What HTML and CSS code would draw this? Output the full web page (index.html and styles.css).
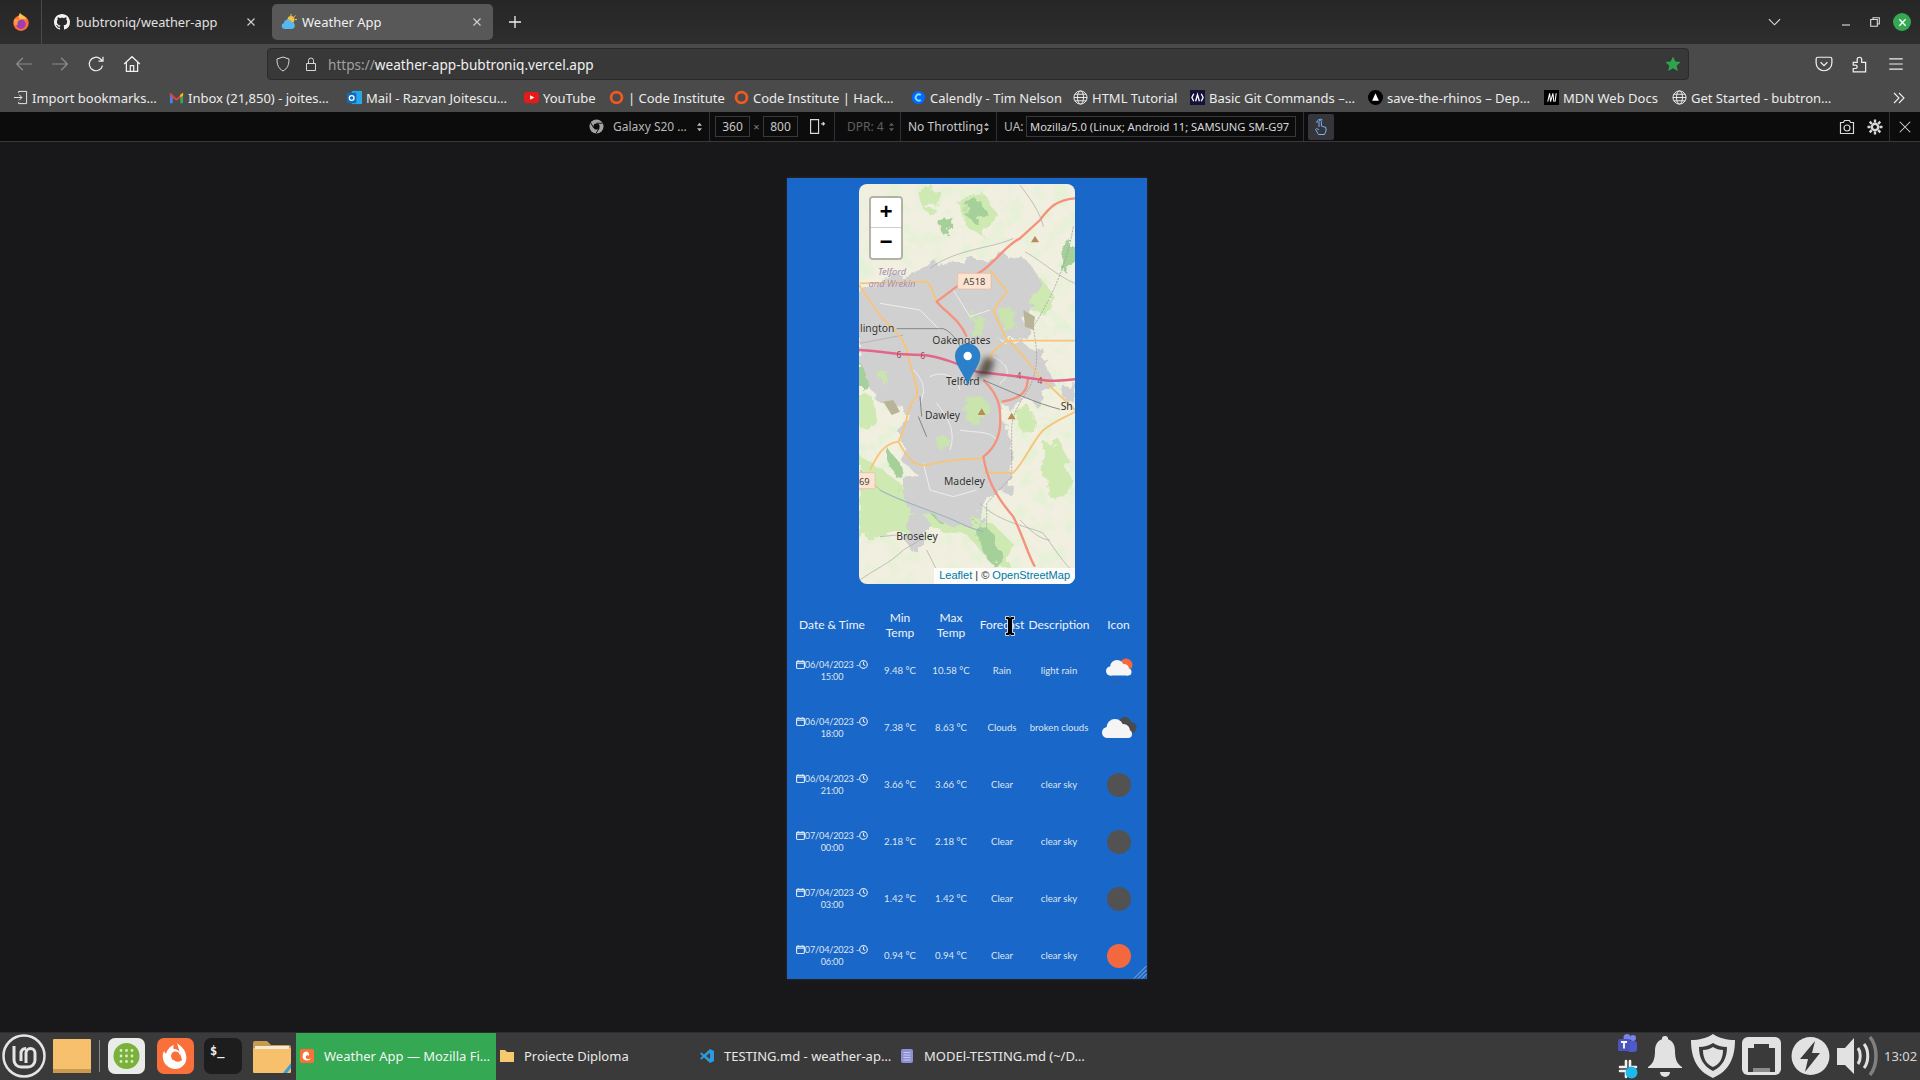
FILE: index.html
```html
<!DOCTYPE html>
<html lang="en">
  <head>
    <meta charset="UTF-8" />
    <meta name="viewport" content="width=device-width, initial-scale=1.0" />
    <title>Weather App</title>
    <link rel="stylesheet" href="styles.css">
  </head>

  <body>
    <svg class="sprites" width="0" height="0">
      <symbol id="calendar" viewBox="0 0 16 16">
        <path d="M1.5 5.5h13M4 .5v3M12 .5v3" stroke="currentColor" stroke-width="2" fill="none" />
        <rect x="1" y="2.5" width="14" height="12.5" rx="1.5" stroke="currentColor" stroke-width="2" fill="none" />
      </symbol>
      <symbol id="clock" viewBox="0 0 16 16">
        <circle cx="8" cy="8" r="6.8" stroke="currentColor" stroke-width="2" fill="none" />
        <path d="M8 3.5V8l3 2" stroke="currentColor" stroke-width="2" fill="none" />
      </symbol>
      <symbol id="globe" viewBox="0 0 16 16">
        <g stroke="currentColor" stroke-width="1" fill="none">
          <circle cx="8" cy="8" r="7" />
          <ellipse cx="8" cy="8" rx="3.2" ry="7" />
          <path d="M1 8h14M2 4.5h12M2 11.5h12" />
        </g>
      </symbol>
      <symbol id="updown" viewBox="0 0 8 12">
        <path d="M4 1l3 3.5H1zM4 11L1 7.5h6z" fill="currentColor" />
      </symbol>
    </svg>

    <header class="tabbar">
      <div class="tab-fox">
        <svg width="18" height="20" viewBox="0 0 16 18">
          <circle cx="8" cy="10" r="7" fill="#ff6a3d" />
          <circle cx="8" cy="11" r="4.2" fill="#9a3fb5" />
          <path d="M7 1c2 2 5 3 6 6-2-1-4-1-6 0-2-1.500-1-4 0-6z" fill="#ffc14d" />
          <path d="M1.5 7c2-1.500 4-1 5 .5-1.500 1-2 2.500-1.500 4L2 12z" fill="#ff9a3c" />
        </svg>
      </div>
      <div class="tab tab-repo">
        <svg class="tab-icon" viewBox="0 0 16 16"><path fill="#f2f2f2" d="M8 0C3.58 0 0 3.58 0 8c0 3.54 2.29 6.53 5.47 7.59.4.07.55-.17.55-.38 0-.19-.01-.82-.01-1.49-2.01.37-2.53-.49-2.69-.94-.09-.23-.48-.94-.82-1.13-.28-.15-.68-.52-.01-.53.63-.01 1.08.58 1.23.82.72 1.21 1.87.87 2.33.66.07-.52.28-.87.51-1.07-1.78-.2-3.64-.89-3.64-3.95 0-.87.31-1.59.82-2.15-.08-.2-.36-1.02.08-2.12 0 0 .67-.21 2.2.82.64-.18 1.32-.27 2-.27.68 0 1.36.09 2 .27 1.53-1.04 2.2-.82 2.2-.82.44 1.1.16 1.92.08 2.12.51.56.82 1.27.82 2.15 0 3.07-1.87 3.75-3.65 3.95.29.25.54.73.54 1.48 0 1.07-.01 1.93-.01 2.2 0 .21.15.46.55.38A8.013 8.013 0 0016 8c0-4.42-3.58-8-8-8z" /></svg>
        <span class="tab-title">bubtroniq/weather-app</span>
        <svg class="tab-close" viewBox="0 0 10 10"><path d="M1.5 1.5l7 7M8.5 1.5l-7 7" /></svg>
      </div>
      <div class="tab tab-active">
        <svg class="tab-icon" viewBox="0 0 16 16">
          <circle cx="10" cy="5.5" r="3.5" fill="#f5c242" />
          <path d="M10 0v2M14.5 1.5l-1.4 1.4M16 5.5h-2" stroke="#f5c242" stroke-width="1" />
          <path d="M3.5 15a3 3 0 0 1-.6-5.9 4 4 0 0 1 7.7-1.200 3.6 3.6 0 0 1 .4 7.100z" fill="#58b7ee" />
        </svg>
        <span class="tab-title">Weather App</span>
        <svg class="tab-close" viewBox="0 0 10 10"><path d="M1.5 1.5l7 7M8.5 1.5l-7 7" /></svg>
      </div>
      <svg class="tab-new" viewBox="0 0 12 12"><path d="M6 0v12M0 6h12" /></svg>
      <svg class="tab-list" viewBox="0 0 14 8"><path d="M1 1l6 6 6-6" /></svg>
      <div class="window-buttons">
        <svg class="win-min" viewBox="0 0 10 10"><path d="M1 8h8" /></svg>
        <svg class="win-max" viewBox="0 0 10 10"><path d="M3 2.5V.7h6.300V7H7.500M.7 2.500H7.300V9.300H.7z" /></svg>
        <div class="win-close">
          <svg viewBox="0 0 10 10"><path d="M1.5 1.5l7 7M8.5 1.5l-7 7" /></svg>
        </div>
      </div>
    </header>

    <nav class="navbar">
      <svg class="nav-btn nav-off" viewBox="0 0 16 16"><path d="M15 8H1.5M7 2.5L1.5 8 7 13.5" /></svg>
      <svg class="nav-btn nav-off" viewBox="0 0 16 16"><path d="M1 8h13.5M9 2.5L14.5 8 9 13.5" /></svg>
      <svg class="nav-btn" viewBox="0 0 16 16"><path d="M13.8 9.5A6 6 0 1 1 12 3.5L14 5.5M14.2 1.5v4h-4" /></svg>
      <svg class="nav-btn" viewBox="0 0 16 16"><path d="M1 8l7-6.500L15 8M3 6.500v8h10v-8M6.500 14.500v-5h3v5" /></svg>
      <div class="urlbar">
        <svg class="url-icon" viewBox="0 0 16 16"><path d="M8 1l6 2c0 6-1.500 9.500-6 12C3.500 12.500 2 9 2 3z" /></svg>
        <svg class="url-icon" viewBox="0 0 16 16"><path d="M3.5 7.5h9v7h-9zM5.500 7.500V4.500a2.500 2.500 0 0 1 5 0v3" /></svg>
        <span class="url-text"><span class="url-scheme">https://</span>weather-app-bubtroniq.vercel.app</span>
        <svg class="url-star" viewBox="0 0 16 16"><path d="M8 .5l2.300 5 5.300.6-3.900 3.600 1.100 5.300L8 12.300 3.200 15l1.100-5.300L.4 6.100l5.300-.6z" /></svg>
      </div>
      <div class="nav-right">
        <svg class="nav-btn" viewBox="0 0 16 16"><path d="M2.5 2h11A1.500 1.500 0 0 1 15 3.500V7a7 7 0 0 1-14 0V3.500A1.500 1.500 0 0 1 2.500 2zM5 6.500l3 3 3-3" /></svg>
        <svg class="nav-btn" viewBox="0 0 16 16"><path d="M2 6.500h3.500V4a2 2 0 0 1 4 0v2.500H13v8.500H2v-3h2a1.500 1.500 0 0 0 0-3H2z" /></svg>
        <svg class="nav-btn" viewBox="0 0 16 16"><path d="M2 3.500h12M2 8h12M2 12.500h12" /></svg>
      </div>
    </nav>

    <div class="bookmarks">
      <div class="bookmark">
        <svg class="bm-icon bm-line" viewBox="0 0 16 16"><path d="M6 3V1.500h8.500v13H6V13M1 8h8.500M6.500 5l3 3-3 3" /></svg>
        <span>Import bookmarks…</span>
      </div>
      <div class="bookmark">
        <svg class="bm-icon" viewBox="0 0 16 16"><path d="M1 14V3l3 2v9z" fill="#4285f4" /><path d="M15 14V3l-3 2v9z" fill="#34a853" /><path d="M1 3l7 6 7-6v3L8 11.500 1 6z" fill="#ea4335" /><path d="M12 5l3-2v3l-3 2z" fill="#fbbc04" /></svg>
        <span>Inbox (21,850) - joites…</span>
      </div>
      <div class="bookmark">
        <svg class="bm-icon" viewBox="0 0 16 16"><rect x="5" y="1" width="11" height="14" fill="#28a8ea" /><rect x="0" y="3" width="10" height="11" rx="1" fill="#0f6cbd" /><circle cx="5" cy="8.5" r="2.5" fill="none" stroke="#fff" stroke-width="1.4" /></svg>
        <span>Mail - Razvan Joitescu…</span>
      </div>
      <div class="bookmark">
        <svg class="bm-icon" viewBox="0 0 16 16"><rect y="2" width="16" height="12" rx="3" fill="#e61a1a" /><path d="M6.5 5.5v5L11 8z" fill="#fff" /></svg>
        <span>YouTube</span>
      </div>
      <div class="bookmark">
        <svg class="bm-icon" viewBox="0 0 16 16"><circle cx="8" cy="8" r="5.8" fill="none" stroke="#f0591f" stroke-width="3" /></svg>
        <span>| Code Institute</span>
      </div>
      <div class="bookmark">
        <svg class="bm-icon" viewBox="0 0 16 16"><circle cx="8" cy="8" r="5.8" fill="none" stroke="#f0591f" stroke-width="3" /></svg>
        <span>Code Institute | Hack…</span>
      </div>
      <div class="bookmark">
        <svg class="bm-icon" viewBox="0 0 16 16"><circle cx="8" cy="8" r="7" fill="#0069ff" /><path d="M10.5 5.5a3.3 3.3 0 1 0 0 5" fill="none" stroke="#7ee0ff" stroke-width="2" /></svg>
        <span>Calendly - Tim Nelson</span>
      </div>
      <div class="bookmark">
        <svg class="bm-icon bm-globe"><use href="#globe" /></svg>
        <span>HTML Tutorial</span>
      </div>
      <div class="bookmark">
        <svg class="bm-icon" viewBox="0 0 16 16"><rect width="16" height="16" fill="#14123a" /><path d="M4 4L2 8l2 4M12 4l2 4-2 4M6 12l2-7 2 7" fill="none" stroke="#fff" stroke-width="1.4" /></svg>
        <span>Basic Git Commands –…</span>
      </div>
      <div class="bookmark">
        <svg class="bm-icon" viewBox="0 0 16 16"><circle cx="8" cy="8" r="8" fill="#000" /><path d="M8 3.5l3.6 8H4.4z" fill="#fff" /></svg>
        <span>save-the-rhinos – Dep…</span>
      </div>
      <div class="bookmark">
        <svg class="bm-icon" viewBox="0 0 16 16"><rect width="16" height="16" fill="#000" /><path d="M4 12.5l2-9 1 9 2.500-9 1 9M13 3.500l-1.200 9" fill="none" stroke="#fff" stroke-width="1.1" /></svg>
        <span>MDN Web Docs</span>
      </div>
      <div class="bookmark">
        <svg class="bm-icon bm-globe"><use href="#globe" /></svg>
        <span>Get Started - bubtron…</span>
      </div>
      <svg class="bm-more" viewBox="0 0 12 12"><path d="M1 1l5 5-5 5M6 1l5 5-5 5" /></svg>
    </div>

    <div class="rdm">
      <svg class="rdm-chrome" viewBox="0 0 16 16"><circle cx="8" cy="8" r="7.5" fill="#a3a3a3" /><circle cx="8" cy="8" r="3.3" fill="#0c0c0d" /><path d="M8 4.500h6.500M5 9.500L1.800 4M10.800 9.800L7.500 15.300" stroke="#0c0c0d" stroke-width="1" /></svg>
      <span class="rdm-device">Galaxy S20 …</span>
      <svg class="rdm-arrows"><use href="#updown" /></svg>
      <i class="rdm-sep rdm-sep-a"></i>
      <span class="rdm-input">360</span>
      <span class="rdm-times">×</span>
      <span class="rdm-input">800</span>
      <svg class="rdm-rotate" viewBox="0 0 16 16"><path d="M1.5 1.5h7.500v13H1.500zM11.500 5.500h2.500M13 4l1.500 1.500L13 7" /></svg>
      <i class="rdm-sep rdm-sep-b"></i>
      <span class="rdm-dpr">DPR: 4</span>
      <svg class="rdm-arrows rdm-dim"><use href="#updown" /></svg>
      <i class="rdm-sep rdm-sep-c"></i>
      <span class="rdm-throttle">No Throttling</span>
      <svg class="rdm-arrows rdm-near"><use href="#updown" /></svg>
      <i class="rdm-sep rdm-sep-c"></i>
      <span class="rdm-ua-label">UA:</span>
      <span class="rdm-ua">Mozilla/5.0 (Linux; Android 11; SAMSUNG SM-G97</span>
      <i class="rdm-sep rdm-sep-d"></i>
      <span class="rdm-touch">
        <svg viewBox="0 0 16 16"><path d="M6 8V2.500a1.200 1.200 0 0 1 2.400 0V7l4.600 1.500V12l-1.500 3.500h-6L2.500 10.500 3.500 9.500 6 11" /><path d="M3.800 4A3.500 3.500 0 0 1 9.500 1" /></svg>
      </span>
      <div class="rdm-right">
        <svg class="rdm-tool" viewBox="0 0 16 16"><path d="M1.5 3.500h3l1-2h5l1 2h3v11h-13z" /><circle cx="8" cy="9" r="3" /></svg>
        <svg class="rdm-tool" viewBox="0 0 16 16"><circle cx="8" cy="8" r="3.2" stroke-width="2.4" /><path d="M8 .5v3M8 12.500v3M.5 8h3M12.500 8h3M2.700 2.700l2.100 2.100M11.200 11.200l2.100 2.100M2.700 13.300l2.100-2.100M11.200 4.800l2.100-2.100" stroke-width="2.4" /></svg>
        <i class="rdm-sep rdm-sep-e"></i>
        <svg class="rdm-tool" viewBox="0 0 16 16"><path d="M2 2l12 12M14 2L2 14" /></svg>
      </div>
    </div>

    <main class="stage">
      <section class="viewport">
        <div class="map">
          <svg class="map-tiles" viewBox="237 42 648 1200" preserveAspectRatio="none">
            <defs>
              <filter id="soft" x="-50%" y="-50%" width="200%" height="200%"><feGaussianBlur stdDeviation="9" /></filter>
              <filter id="rough" x="-10%" y="-10%" width="120%" height="120%">
                <feTurbulence type="fractalNoise" baseFrequency="0.025" numOctaves="4" seed="7" result="noise" />
                <feDisplacementMap in="SourceGraphic" in2="noise" scale="55" />
                <feGaussianBlur stdDeviation="1.5" />
              </filter>
              <filter id="mottle" x="0" y="0" width="100%" height="100%">
                <feTurbulence type="fractalNoise" baseFrequency="0.022" numOctaves="5" seed="12" />
                <feColorMatrix values="0 0 0 0 0.76  0 0 0 0 0.89  0 0 0 0 0.66  0 0 0 5 -2.5" />
                <feGaussianBlur stdDeviation="1" />
              </filter>
            </defs>
            <rect x="237" y="42" width="648" height="1200" fill="#f1efe0" />
            <rect x="237" y="42" width="648" height="1200" filter="url(#mottle)" opacity=".75" />
            <!-- parks and woods -->
            <g fill="#cfe9b2" filter="url(#rough)">
              <path d="M410 60l60 -10 20 50 -50 30z" />
              <path d="M540 90l70 -20 40 60 -40 70 -50 -30z" />
              <path d="M700 340l80 -20 50 70 -40 40 -90 -30z" />
              <path d="M237 660l40 20 20 60 -20 50 -40 -20z" />
              <path d="M700 720l50 -10 20 50 -40 30z" />
              <path d="M790 820l40 -20 35 70v100l-50 20 -30 -90z" />
              <path d="M237 860l60 30 90 70 130 50 120 50 60 60 -20 70 -50 -20 -60 -70 -110 -30 -220 40z" />
            </g>
            <g fill="#a6d09a" filter="url(#rough)">
              <path d="M470 145l40 -10 10 40 -30 20z" />
              <path d="M560 100l40 -10 20 40 -30 30 -30 -20z" />
              <path d="M237 555l50 10 40 60 -20 35 -70 -10z" />
              <path d="M590 1060l40 20 30 70 -20 40 -40 -70z" />
              <path d="M320 830l40 50 15 50 -30 -10 -30 -60z" />
              <path d="M840 250l45 -30v50l-30 40z" />
              <path d="M420 1000l60 10 40 40 -50 0z" />
            </g>
            <!-- built up areas -->
            <g fill="#d1d0d0" filter="url(#rough)">
              <path d="M270 345l80 -30 100 -25 70 -20 80 0 70 -10 70 10 45 70 -30 60 -30 40 30 50 -10 20 -150 0 -150 -10 -150 10 -70 -10 -10 -120z" />
              <path d="M237 490l200 -5 190 10 50 25 120 20 -20 80 -30 50 -70 40 -20 -10 -80 20 -70 -10 -60 30 -90 -30 -70 -20 -50 -120 z" />
              <path d="M400 640l260 10 20 120 20 100 -5 90 -65 30 -30 60 -70 30 -60 -40 -90 -20 -20 -60 50 -50 -40 -30 -10 -90z" />
              <path d="M650 540l70 -30 60 50 50 90 -80 50 -50 -40z" />
              <path d="M380 1030l40 -10 30 40 -20 50 -30 40 -20 -50z" />
              <path d="M237 420l30 30 10 50 -40 -10z" />
              <path d="M840 640h45v60l-30 -10z" />
            </g>
            <g fill="#c9e5ad" filter="url(#rough)">
              <path d="M560 680l50 0 20 50 -40 40 -40 -30z" />
              <path d="M570 440l40 0 10 40 -40 20z" />
              <path d="M470 800l30 0 10 30 -30 10z" />
              <path d="M660 420l40 0 10 50 -40 10z" />
              <path d="M300 600l30 10 -10 30 -30 -10z" />
            </g>
            <path d="M730 420l35 20 -5 40 -25 -10z" fill="#b9b498" />
            <path d="M310 695l30 -5 20 35 -25 10z" fill="#b9b498" />
            <!-- minor roads -->
            <g fill="none" stroke="#fff" stroke-width="2.5" opacity=".75">
              <path d="M300 400l120 20 60 60M450 620c40-20 80 0 90 40M470 700c30 40 60 80 40 140M540 780c50 10 90 0 110 30M400 600c30 30 40 60 20 100M520 360l50 80 60 -20M640 560c40 20 60 50 20 80M450 960l70 20 70 -20M430 880l20 80" />
            </g>
            <g fill="none" stroke="#a8a8a8" stroke-width="2">
              <path d="M720 45c30 40 60 80 70 125M735 245c60 35 100 75 150 95M700 205c-60 30-170 30-250 90M240 520l130 -25M600 1000c60 60 150 70 190 90 30 40 60 90 95 120M240 1230c40-30 90-50 130-90l50 -30M440 1140l30 60M240 900l60 60M720 1050c30 30 60 60 90 60M300 1100l50 -5" />
            </g>
            <path d="M880 170c-20 120-70 220-120 300 10 70 20 110-10 180-25 40-55 80-55 130v140l-75 80v80" fill="none" stroke="#999" stroke-width="2" stroke-dasharray="7 3" />
            <path d="M300 960c50 30 150 60 220 90 40 20 70 30 90 35" fill="none" stroke="#9db4c4" stroke-width="3.5" />
            <path d="M420 680l5 60M415 740l25 60" fill="none" stroke="#5c5c5c" stroke-width="2" />
            <!-- roads -->
            <g fill="none" stroke="#f8c477" stroke-width="5.5" stroke-linejoin="round">
              <path d="M237 345l65 95c40 40 78 70 83 120 12 60 32 90 25 120-30 25-25 80-55 135-45 5-65 45-85 85" />
              <path d="M240 340l200 -5c20 15 20 45 30 60" />
              <path d="M630 300c30 40 50 60 50 65l-40 55c20 50 40 90 45 92h200" />
              <path d="M685 512c-45 18-65 58-65 88" />
              <path d="M685 512c45 38 75 88 95 108l105 100" />
              <path d="M355 815c25 45 45 75 85 70 60-15 120-20 170-20" />
              <path d="M610 908h90c30-28 60-98 90-128 40-30 70-40 95-55" />
            </g>
            <g fill="none" stroke="#f5917c" stroke-width="7" stroke-linejoin="round">
              <path d="M885 85c-55 5-75 25-105 65l-60 55c-40 20-70 65-110 95l-80 50-60 45c30 35 70 55 90 105" />
              <path d="M610 630c40 40 55 70 50 140-5 50-30 75-50 90 10 60 30 110 90 180 30 60 50 130 65 150" />
              <path d="M665 695c35-5 65-15 75-45l5 -30" />
            </g>
            <path d="M237 540c43 0 103 15 193 15 50 5 100 25 160 50l130 15c50 5 80 20 165 8" fill="none" stroke="#e3658a" stroke-width="7.5" />
            <path d="M350 476h140c30 10 60 60 70 100M610 630c70 30 160 70 230 88" fill="none" stroke="#777" stroke-width="2.5" />
            <!-- peaks -->
            <g fill="#bd8a55">
              <path d="M765 197l12 20h-24z" />
              <path d="M605 715l12 20h-24z" />
              <path d="M695 728l12 20h-24z" />
            </g>
            <!-- road shields -->
            <rect x="533" y="310" width="100" height="47" rx="4" fill="#fce4d1" stroke="#e9b6a0" stroke-width="2" />
            <rect x="225" y="908" width="60" height="48" rx="4" fill="#fce4d1" stroke="#e9b6a0" stroke-width="2" />
            <g class="map-label">
              <text class="map-region" x="336" y="314" text-anchor="middle">Telford</text>
              <text class="map-region" x="336" y="350" text-anchor="middle">and Wrekin</text>
              <text class="map-shield" x="583" y="344" text-anchor="middle">A518</text>
              <text class="map-shield" x="237" y="944">69</text>
              <text class="map-road" x="357" y="565" text-anchor="middle">6</text>
              <text class="map-road" x="428" y="568" text-anchor="middle">6</text>
              <text class="map-road" x="717" y="628" text-anchor="middle">4</text>
              <text class="map-road" x="780" y="642" text-anchor="middle">4</text>
              <text x="240" y="487">lington</text>
              <text x="457" y="521">Oakengates</text>
              <text x="498" y="644">Telford</text>
              <text x="435" y="748">Dawley</text>
              <text x="492" y="946">Madeley</text>
              <text x="349" y="1111">Broseley</text>
              <text x="842" y="720">Sh</text>
            </g>
            <!-- marker and its shadow -->
            <path d="M585 625l30 -65 30 10 -15 45z" fill="#2e2a26" opacity=".75" filter="url(#soft)" />
            <path d="M563 646c-6-30-37-60-37-88a37 37 0 0 1 74 0c0 28-31 58-37 88z" fill="#2a81ca" stroke="#2775ab" stroke-width="2" />
            <circle cx="563" cy="558" r="12.5" fill="#fff" />
          </svg>
          <div class="zoom-control">
            <div class="zoom-btn">+</div>
            <div class="zoom-btn">−</div>
          </div>
          <div class="attribution"><a>Leaflet</a> | © <a>OpenStreetMap</a></div>
        </div>

        <table class="forecast">
          <thead>
            <tr>
              <th class="col-date">Date &amp; Time</th>
              <th class="col-min">Min Temp</th>
              <th class="col-max">Max Temp</th>
              <th class="col-main">Forecast</th>
              <th class="col-desc">Description</th>
              <th class="col-icon">Icon</th>
            </tr>
          </thead>
          <tbody>
            <tr>
              <td class="cell-date"><svg class="dt-icon"><use href="#calendar" /></svg>06/04/2023 -<svg class="dt-icon"><use href="#clock" /></svg><br />15:00</td>
              <td>9.48 °C</td>
              <td>10.58 °C</td>
              <td>Rain</td>
              <td>light rain</td>
              <td>
                <svg class="weather" viewBox="0 0 50 50">
                  <circle cx="32" cy="19" r="6.5" fill="#f4683f" />
                  <g fill="#f5f5f5">
                    <circle cx="16.5" cy="25" r="4.5" />
                    <circle cx="23" cy="21" r="7" />
                    <circle cx="30" cy="23" r="5" />
                    <circle cx="34" cy="26" r="3.5" />
                    <rect x="16" y="24" width="18" height="5.5" />
                  </g>
                  <path d="M18 34l1 2M21 35l1 3M24 35l1 2" stroke="#3c5a80" stroke-width="1" />
                </svg>
              </td>
            </tr>
            <tr>
              <td class="cell-date"><svg class="dt-icon"><use href="#calendar" /></svg>06/04/2023 -<svg class="dt-icon"><use href="#clock" /></svg><br />18:00</td>
              <td>7.38 °C</td>
              <td>8.63 °C</td>
              <td>Clouds</td>
              <td>broken clouds</td>
              <td>
                <svg class="weather" viewBox="0 0 50 50">
                  <g fill="#4b4b4b">
                    <circle cx="31" cy="20" r="6" />
                    <circle cx="37" cy="24.5" r="5.5" />
                    <circle cx="26" cy="25" r="4.5" />
                  </g>
                  <g fill="#f5f5f5">
                    <circle cx="13.5" cy="29.5" r="5.5" />
                    <circle cx="21" cy="24.5" r="8.5" />
                    <circle cx="29.5" cy="27.5" r="6.5" />
                    <circle cx="34" cy="31" r="4" />
                    <rect x="13" y="28" width="21" height="7" />
                  </g>
                </svg>
              </td>
            </tr>
            <tr>
              <td class="cell-date"><svg class="dt-icon"><use href="#calendar" /></svg>06/04/2023 -<svg class="dt-icon"><use href="#clock" /></svg><br />21:00</td>
              <td>3.66 °C</td>
              <td>3.66 °C</td>
              <td>Clear</td>
              <td>clear sky</td>
              <td><span class="disc disc-night"></span></td>
            </tr>
            <tr>
              <td class="cell-date"><svg class="dt-icon"><use href="#calendar" /></svg>07/04/2023 -<svg class="dt-icon"><use href="#clock" /></svg><br />00:00</td>
              <td>2.18 °C</td>
              <td>2.18 °C</td>
              <td>Clear</td>
              <td>clear sky</td>
              <td><span class="disc disc-night"></span></td>
            </tr>
            <tr>
              <td class="cell-date"><svg class="dt-icon"><use href="#calendar" /></svg>07/04/2023 -<svg class="dt-icon"><use href="#clock" /></svg><br />03:00</td>
              <td>1.42 °C</td>
              <td>1.42 °C</td>
              <td>Clear</td>
              <td>clear sky</td>
              <td><span class="disc disc-night"></span></td>
            </tr>
            <tr>
              <td class="cell-date"><svg class="dt-icon"><use href="#calendar" /></svg>07/04/2023 -<svg class="dt-icon"><use href="#clock" /></svg><br />06:00</td>
              <td>0.94 °C</td>
              <td>0.94 °C</td>
              <td>Clear</td>
              <td>clear sky</td>
              <td><span class="disc disc-day"></span></td>
            </tr>
          </tbody>
        </table>

        <svg class="ibeam" viewBox="0 0 10 20"><path d="M.5.5h3.500l1 1 1-1h3.500v3H7.500v13h2v3H6l-1-1-1 1H.5v-3h2v-13H.5z" fill="#000" stroke="#fff" stroke-width=".8" /></svg>
        <svg class="resize-grip" viewBox="0 0 14 14"><path d="M13.5 1L1 13.5M13.5 5L5 13.5M13.5 9L9 13.5" /></svg>
      </section>
    </main>

    <footer class="taskbar">
      <svg class="mint" viewBox="0 0 44 44">
        <circle cx="22" cy="22" r="20.5" fill="none" stroke="#e4e4e4" stroke-width="2.5" />
        <path d="M12 12v14a7 7 0 0 0 7 7h7a7 7 0 0 0 7-7v-7a4.500 4.500 0 0 0-9 0v10M19 27V19a4.500 4.500 0 0 1 5-4.500" fill="none" stroke="#e4e4e4" stroke-width="3" />
      </svg>
      <svg class="launcher launcher-files" viewBox="0 0 38 34"><rect width="38" height="34" rx="1" fill="#f6c06c" /><rect y="30" width="38" height="4" fill="#c99a4f" /></svg>
      <i class="launcher-sep"></i>
      <svg class="launcher launcher-apps" viewBox="0 0 37 36">
        <rect width="37" height="36" rx="7" fill="#e9ece8" />
        <circle cx="18.5" cy="18" r="13" fill="#79b13b" />
        <g fill="#dcedc8">
          <circle cx="13" cy="12.5" r="1.4" /><circle cx="18.5" cy="12.5" r="1.4" /><circle cx="24" cy="12.5" r="1.4" />
          <circle cx="13" cy="18" r="1.4" /><circle cx="18.5" cy="18" r="1.4" /><circle cx="24" cy="18" r="1.4" />
          <circle cx="13" cy="23.5" r="1.4" /><circle cx="18.5" cy="23.5" r="1.4" /><circle cx="24" cy="23.5" r="1.4" />
        </g>
      </svg>
      <svg class="launcher launcher-fox" viewBox="0 0 37 36">
        <rect width="37" height="36" rx="7" fill="#f9703a" />
        <path d="M20 5c2 2 8 5 9 12 2 8-4 14-11 14A12.500 12.500 0 0 1 7 13l2 3c1-4 4-8 8-9-1 2-1 3 0 4 4 0 7 3 6 7-1 3-5 4-7 2 1 4 6 5 9 2" fill="#fff" />
        <circle cx="18.5" cy="18" r="4.5" fill="#f9703a" />
      </svg>
      <svg class="launcher launcher-term" viewBox="0 0 38 36">
        <rect width="38" height="36" rx="7" fill="#1d1d1d" />
        <text x="6" y="17" class="term-prompt">$_</text>
      </svg>
      <svg class="launcher launcher-home" viewBox="0 0 38 36">
        <path d="M0 5a2 2 0 0 1 2-2h12l4 4h18a2 2 0 0 1 2 2v25H0z" fill="#c79a4f" />
        <rect y="10" width="38" height="25" rx="1" fill="#f6c06c" />
        <rect x="2" y="8" width="34" height="3" fill="#f4e9d3" />
        <path d="M30 35l8-10v5l-4 5z" fill="#3b9ed9" />
      </svg>

      <div class="task task-active">
        <svg class="task-icon" viewBox="0 0 14 14"><rect width="14" height="14" rx="2" fill="#f9703a" /><path d="M7 2.500a4.500 4.500 0 1 0 4.200 6.300c-1.200 1.500-3.400 1.800-4.800.7-1.200-1.100-.8-3 .8-3.300 1.100-.3 1.800.4 1.800 1 .7-1.800-.4-3.900-2-4.700z" fill="#fff" /></svg>
        <span>Weather App — Mozilla Fi…</span>
      </div>
      <div class="task">
        <svg class="task-icon" viewBox="0 0 14 14"><path d="M0 1h5l2 2h7v10H0z" fill="#f6c96f" /></svg>
        <span>Proiecte Diploma</span>
      </div>
      <div class="task">
        <svg class="task-icon" viewBox="0 0 14 14"><path d="M10 0l4 2v10l-4 2L4 8.500 1.500 10.500 0 9.500 2.500 7 0 4.500 1.500 3.500 4 5.500z" fill="#2a9bdc" /><path d="M10 4L6 7l4 3z" fill="#3c3c3c" /></svg>
        <span>TESTING.md - weather-ap…</span>
      </div>
      <div class="task">
        <svg class="task-icon" viewBox="0 0 14 14"><rect x="1" width="12" height="14" rx="2" fill="#8f8fd6" /><path d="M3.5 3.500h7M3.500 6h7M3.500 8.500h7M3.500 11h7" stroke="#c9c9ee" stroke-width="1" /></svg>
        <span>MODEl-TESTING.md (~/D…</span>
      </div>

      <div class="tray">
        <div class="tray-small">
          <svg class="tray-teams" viewBox="0 0 20 20">
            <circle cx="15" cy="4" r="3" fill="#7b83eb" />
            <circle cx="9" cy="3.5" r="3.5" fill="#7b83eb" />
            <rect x="9" y="7" width="10" height="11" rx="3" fill="#5059c9" />
            <rect y="5" width="12" height="12" rx="1.5" fill="#4b53bc" />
            <path d="M3 8h6M6 8v6.500" stroke="#fff" stroke-width="1.8" />
          </svg>
          <svg class="tray-slack" viewBox="0 0 20 20">
            <path d="M2 8h6M8 2v6M12 8V2M18 8h-6M2 12h6M8 18v-6" stroke="#f0f0f0" stroke-width="2.6" stroke-linecap="round" />
            <circle cx="13.5" cy="13.5" r="6" fill="#1eb8ea" />
          </svg>
        </div>
        <svg class="tray-bell" viewBox="0 0 34 41"><path d="M17 0a3 3 0 0 1 3 3.300C25 5 27 9.500 27 15c0 8 2 13 7 16v1H0v-1c5-3 7-8 7-16 0-5.500 2-10 7-11.700A3 3 0 0 1 17 0z" /><path d="M12 36h10a5 5 0 0 1-10 0z" /></svg>
        <svg class="tray-shield" viewBox="0 0 44 44"><path d="M22 0c6 4 14 6 22 6 0 18-6 31-22 38C6 37 0 24 0 6c8 0 16-2 22-6z" fill="#e2e2e2" /><path d="M22 9c4 2.500 9 4 14 4 0 11-4 19-14 24C12 32 8 24 8 13c5 0 10-1.500 14-4z" fill="#3a3a3a" /><path d="M22 13c3 2 6 3 10 3 0 8-3 14-10 17-7-3-10-9-10-17 4 0 7-1 10-3z" fill="#e2e2e2" /></svg>
        <svg class="tray-net" viewBox="0 0 39 38"><rect width="39" height="38" rx="6" fill="#e2e2e2" /><path d="M6 11h6V7h15v4h6v24H6z" fill="#3a3a3a" /><rect x="11" y="31" width="17" height="4" fill="#8c8c8c" /></svg>
        <svg class="tray-power" viewBox="0 0 39 38"><circle cx="19.5" cy="19" r="19" fill="#e2e2e2" /><path d="M24 4L9 22h8l-3 13 15-19h-8z" fill="#3a3a3a" /></svg>
        <svg class="tray-sound" viewBox="0 0 41 42">
          <path d="M0 13h8L17 3v36l-9-9H0z" fill="#e2e2e2" />
          <path d="M21 13c3 4 3 12 0 16" fill="none" stroke="#e2e2e2" stroke-width="3" />
          <path d="M27 9c5 6 5 18 0 24" fill="none" stroke="#e2e2e2" stroke-width="3" />
          <path d="M33 2c8 10 8 28 0 38" fill="none" stroke="#808080" stroke-width="3.5" />
        </svg>
        <span class="clock">13:02</span>
      </div>
    </footer>
  </body>
</html>
```

FILE: styles.css
```css
* {
  box-sizing: border-box;
}

html,
body {
  margin: 0;
  padding: 0;
  height: 100%;
  overflow: hidden;
}

body {
  width: 1920px;
  height: 1080px;
  display: flex;
  flex-direction: column;
  font-family: "Noto Sans", sans-serif;
  font-size: 13px;
  color: #e6e6e6;
  background-color: #18181a;
}

svg {
  display: block;
  flex: none;
}

.sprites {
  position: absolute;
}

/* browser tabs */
.tabbar {
  height: 44px;
  flex: none;
  display: flex;
  align-items: center;
  background: linear-gradient(#262626, #2e2e2e);
}

.tab-fox {
  width: 42px;
  height: 44px;
  flex: none;
  display: flex;
  align-items: center;
  justify-content: center;
  border-right: 1px solid #4a4a4a;
}

.tab {
  width: 221px;
  height: 36px;
  flex: none;
  display: flex;
  align-items: center;
  padding: 0 11px 0 13px;
  border-radius: 5px;
  font-size: 13px;
  color: #e0e0e0;
}

.tab-repo {
  width: 225px;
  padding-left: 12px;
  font-size: 12.8px;
}

.tab-repo .tab-icon {
  margin-right: 6px;
}

.tab-active {
  background-color: #585858;
  margin-left: 5px;
  padding-left: 9px;
  color: #f0f0f0;
}

.tab-icon {
  width: 16px;
  height: 16px;
  margin-right: 5px;
}

.tab-title {
  flex: 1;
  white-space: nowrap;
}

.tab-close {
  width: 10px;
  height: 10px;
  stroke: #d0d0d0;
  stroke-width: 1.1;
  fill: none;
}

.tab-new {
  width: 12px;
  height: 12px;
  margin-left: 16px;
  stroke: #f0f0f0;
  stroke-width: 1.3;
  fill: none;
}

.tab-list {
  width: 13px;
  height: 8px;
  margin-left: auto;
  stroke: #dcdcdc;
  stroke-width: 1.2;
  fill: none;
}

.window-buttons {
  width: 139px;
  flex: none;
  display: flex;
  align-items: center;
  padding-left: 60px;
  stroke: #dcdcdc;
  stroke-width: 1.1;
  fill: none;
}

.win-min,
.win-max {
  width: 10px;
  height: 10px;
  margin-right: 19px;
}

.win-max {
  margin-right: 13px;
}

.win-close {
  width: 18px;
  height: 18px;
  border-radius: 50%;
  background-color: #34a853;
  display: flex;
  align-items: center;
  justify-content: center;
  stroke: #fff;
  stroke-width: 1.5;
}

.win-close svg {
  width: 9px;
  height: 9px;
}

/* address bar */
.navbar {
  height: 38px;
  flex: none;
  display: flex;
  align-items: center;
  padding: 4px 0 2px 15px;
  background-color: #4a4a4a;
}

.nav-btn {
  width: 18px;
  height: 18px;
  margin-right: 18px;
  stroke: #f0f0f0;
  stroke-width: 1.1;
  fill: none;
}

.nav-off {
  opacity: 0.4;
}

.urlbar {
  width: 1422px;
  height: 32px;
  margin: 0 0 0 108px;
  flex: none;
  display: flex;
  align-items: center;
  padding: 0 0 0 7px;
  background-color: #383838;
  border: 1px solid #2b2b2b;
  border-radius: 4px;
}

.url-icon {
  width: 16px;
  height: 16px;
  margin-right: 12px;
  stroke: #d8d8d8;
  stroke-width: 1;
  fill: none;
}

.url-text {
  flex: 1;
  margin-left: -3px;
  font-size: 13.6px;
  color: #f0f0f0;
}

.url-scheme {
  color: #a0a0a0;
}

.url-star {
  width: 16px;
  height: 16px;
  margin-right: 7px;
  fill: #2ea44f;
}

.nav-right {
  display: flex;
  margin-left: 126px;
}

/* bookmarks toolbar */
.bookmarks {
  height: 30px;
  flex: none;
  display: grid;
  grid-template-columns: 156px 178px 177px 85px 125px 177px 162px 117px 178px 176px 128px 160px 1fr;
  align-items: center;
  padding: 1px 15px 0 13px;
  background-color: #4a4a4a;
  font-size: 13px;
  color: #ececec;
}

.bookmark {
  display: flex;
  align-items: center;
  gap: 4px;
  white-space: nowrap;
}

.bm-icon {
  width: 15px;
  height: 15px;
}

.bm-line {
  stroke: #f0f0f0;
  stroke-width: 1;
  fill: none;
}

.bm-globe {
  color: #f0f0f0;
}

.bm-more {
  width: 12px;
  height: 12px;
  margin-left: auto;
  stroke: #f0f0f0;
  stroke-width: 1.1;
  fill: none;
}

/* responsive design toolbar */
.rdm {
  height: 30px;
  flex: none;
  display: flex;
  align-items: center;
  padding-left: 589px;
  background-color: #0c0c0d;
  border-bottom: 1px solid #38383d;
  font-size: 12px;
  color: #b8b8b8;
}

.rdm-chrome {
  width: 15px;
  height: 15px;
}

.rdm-device {
  width: 83px;
  margin-left: 9px;
  white-space: nowrap;
}

.rdm-arrows {
  width: 7px;
  height: 10px;
  margin-right: 6px;
}

.rdm-dim {
  opacity: 0.45;
  margin-left: 6px;
  margin-right: 5px;
}

.rdm-near {
  margin-left: 2px;
  margin-right: 6px;
}

.rdm-sep {
  width: 1px;
  height: 29px;
  flex: none;
  background-color: #303034;
}

.rdm-sep-a {
  margin-right: 5px;
}

.rdm-sep-b {
  margin-left: 8px;
  margin-right: 12px;
}

.rdm-sep-c {
  margin-right: 7px;
}

.rdm-sep-d {
  margin-left: 7px;
  margin-right: 4px;
}

.rdm-sep-e {
  margin: 0 8px 0 6px;
}

.rdm-input {
  width: 35px;
  height: 21px;
  flex: none;
  display: flex;
  align-items: center;
  justify-content: center;
  border: 1px solid #38383d;
  color: #c8c8c8;
}

.rdm-times {
  width: 13px;
  text-align: center;
  color: #808080;
  font-size: 11px;
}

.rdm-rotate {
  width: 17px;
  height: 17px;
  margin-left: 11px;
  stroke: #d8d8d8;
  stroke-width: 1.1;
  fill: none;
}

.rdm-dpr {
  width: 35px;
  color: #606060;
  white-space: nowrap;
}

.rdm-throttle {
  width: 73px;
  color: #c8c8c8;
  white-space: nowrap;
}

.rdm-ua-label {
  width: 22px;
  color: #b8b8b8;
}

.rdm-ua {
  width: 270px;
  height: 21px;
  flex: none;
  display: block;
  padding: 0 3px;
  font-size: 11.2px;
  line-height: 19px;
  border: 1px solid #38383d;
  color: #d8d8d8;
  white-space: nowrap;
  overflow: hidden;
}

.rdm-touch {
  width: 26px;
  height: 26px;
  flex: none;
  display: flex;
  align-items: center;
  justify-content: center;
  background-color: #35353a;
  border-radius: 2px;
}

.rdm-touch svg {
  width: 16px;
  height: 18px;
  stroke: #75b4f5;
  stroke-width: 1;
  fill: none;
}

.rdm-right {
  margin-left: auto;
  display: flex;
  align-items: center;
}

.rdm-tool {
  width: 16px;
  height: 16px;
  margin-left: 12px;
  stroke: #d8d8d8;
  stroke-width: 1.2;
  fill: none;
}

.rdm-right .rdm-tool:last-child {
  margin: 0 8px 0 0;
  width: 14px;
  height: 14px;
}

/* page area */
.stage {
  flex: 1;
  display: flex;
  justify-content: center;
  align-items: flex-start;
  padding-top: 36px;
  padding-left: 14px;
}

.viewport {
  position: relative;
  width: 360px;
  height: 801px;
  overflow: hidden;
  padding-top: 6px;
  background-color: #1967c8;
  box-shadow: 0 0 3px rgba(255, 255, 255, 0.12);
  font-family: Lato, sans-serif;
  color: #dde5ee;
}

.map {
  position: relative;
  width: 216px;
  height: 400px;
  margin: 0 auto;
  border-radius: 8px;
  overflow: hidden;
}

.map-tiles {
  width: 216px;
  height: 400px;
}

.map-label text {
  font-family: "Noto Sans", sans-serif;
  font-size: 31px;
  fill: #333;
  stroke: #f3f1e8;
  stroke-width: 0.6px;
  paint-order: stroke;
}

.map-label .map-region {
  font-size: 28px;
  font-style: italic;
  fill: #a58aa8;
}

.map-label .map-shield {
  font-size: 28px;
  fill: #444;
  stroke: none;
}

.map-label .map-road {
  font-size: 26px;
  fill: #a83252;
}

.zoom-control {
  position: absolute;
  top: 12px;
  left: 10px;
  width: 34px;
  border: 2px solid rgba(0, 0, 0, 0.25);
  border-radius: 4px;
  background-clip: padding-box;
}

.zoom-btn {
  height: 30px;
  background-color: #fff;
  color: #000;
  font-family: "Liberation Mono", monospace;
  font-size: 22px;
  font-weight: bold;
  line-height: 31px;
  text-align: center;
}

.zoom-btn:first-child {
  border-bottom: 1px solid #ccc;
  border-radius: 2px 2px 0 0;
}

.zoom-btn:last-child {
  border-radius: 0 0 2px 2px;
}

.attribution {
  position: absolute;
  right: 0;
  bottom: 0;
  height: 16px;
  padding: 0 5px;
  background-color: rgba(255, 255, 255, 0.8);
  font-family: "Liberation Sans", sans-serif;
  font-size: 11px;
  line-height: 14px;
  color: #333;
  white-space: nowrap;
}

.attribution a {
  color: #0078a8;
}

/* forecast table */
.forecast {
  width: 357px;
  margin: 23px 0 0 3px;
  table-layout: fixed;
  border-collapse: collapse;
  text-align: center;
}

.forecast th {
  height: 35px;
  padding: 0;
  font-size: 12px;
  font-weight: 400;
  line-height: 15px;
  color: #f0f3f6;
}

.forecast td {
  height: 57px;
  padding: 0;
  font-size: 9.6px;
  line-height: 12px;
}

.forecast .cell-date {
  font-size: 9.1px;
  letter-spacing: -0.15px;
}

.col-date {
  width: 84px;
}

.col-min {
  width: 52px;
}

.col-max {
  width: 50px;
}

.col-main {
  width: 52px;
}

.col-desc {
  width: 62px;
}

.col-icon {
  width: 57px;
}

.forecast .col-min,
.forecast .col-max {
  padding: 0 8px;
}

.forecast .col-main {
  white-space: nowrap;
}

.dt-icon {
  display: inline-block;
  width: 9px;
  height: 9px;
  vertical-align: -1px;
}

.weather {
  width: 50px;
  height: 50px;
  margin: 0 auto;
}

.disc {
  display: block;
  width: 24px;
  height: 24px;
  margin: 0 auto;
  border-radius: 50%;
}

.disc-night {
  background-color: #525252;
}

.disc-day {
  background-color: #f4683f;
}

.ibeam {
  position: absolute;
  left: 218px;
  top: 438px;
  width: 10px;
  height: 20px;
}

.resize-grip {
  position: absolute;
  right: 0;
  bottom: 0;
  width: 14px;
  height: 14px;
  stroke: #b8c4d4;
  stroke-width: 0.8;
  fill: none;
}

/* desktop panel */
.taskbar {
  height: 48px;
  flex: none;
  display: flex;
  align-items: center;
  padding-bottom: 1px;
  background-color: #3a3a3a;
  border-top: 1px solid #2e2e2e;
  font-size: 13px;
  color: #e8e8e8;
}

.mint {
  width: 44px;
  height: 44px;
  margin-left: 2px;
}

.launcher {
  height: 36px;
}

.launcher-files {
  width: 38px;
  height: 34px;
  margin-left: 7px;
}

.launcher-sep {
  width: 1px;
  height: 32px;
  flex: none;
  margin: 0 8px;
  background-color: #8a8a8a;
}

.launcher-apps {
  width: 37px;
}

.launcher-fox {
  width: 37px;
  margin-left: 12px;
}

.launcher-term {
  width: 38px;
  margin-left: 10px;
}

.launcher-home {
  width: 38px;
  margin-left: 11px;
  margin-right: 5px;
}

.term-prompt {
  font-family: "DejaVu Sans Mono", monospace;
  font-size: 12px;
  font-weight: bold;
  fill: #f0f0f0;
}

.task {
  width: 200px;
  height: 47px;
  flex: none;
  display: flex;
  align-items: center;
  gap: 10px;
  padding: 0 0 1px 4px;
  white-space: nowrap;
}

.task-active {
  background-color: #34a853;
  color: #f4f4f4;
}

.task-icon {
  width: 14px;
  height: 14px;
}

.tray {
  margin-left: auto;
  display: flex;
  align-items: center;
}

.tray-small {
  display: flex;
  flex-direction: column;
  align-items: center;
  gap: 5px;
  margin-right: 10px;
}

.tray-teams,
.tray-slack {
  width: 20px;
  height: 20px;
}

.tray-bell {
  width: 34px;
  height: 41px;
  fill: #e2e2e2;
}

.tray-shield {
  width: 44px;
  height: 44px;
  margin-left: 9px;
}

.tray-net {
  width: 39px;
  height: 38px;
  margin-left: 7px;
}

.tray-power {
  width: 39px;
  height: 38px;
  margin-left: 10px;
}

.tray-sound {
  width: 41px;
  height: 42px;
  margin-left: 7px;
}

.clock {
  width: 36px;
  margin-left: 6px;
  font-size: 13px;
  color: #d8d8d8;
}
```
